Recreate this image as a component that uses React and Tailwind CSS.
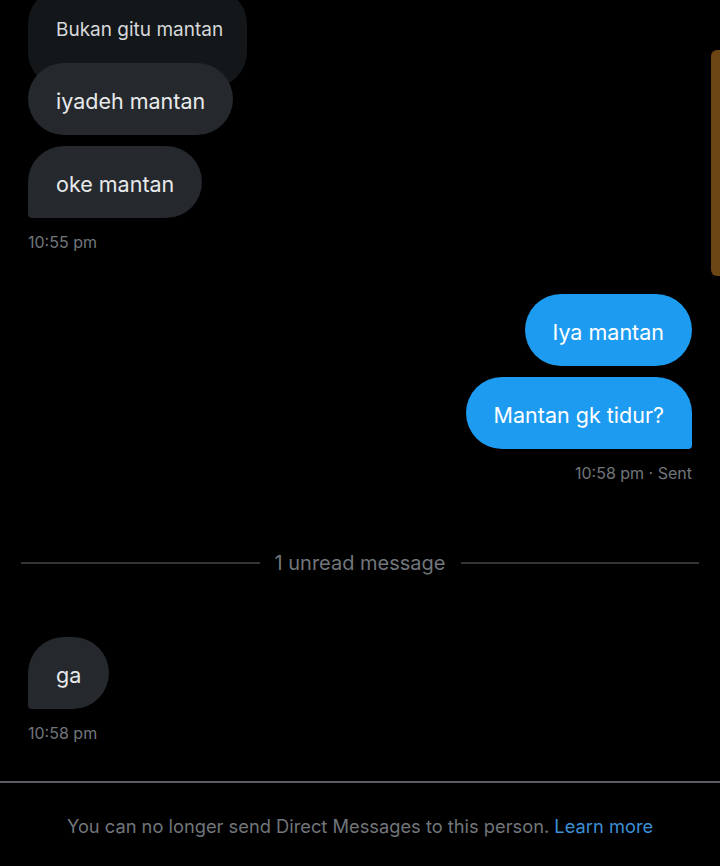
import React from "react";

const font = { fontFamily: "Inter, 'Noto Sans', sans-serif" };

const Received = ({ children, tail = false, className = "" }) => (
  <div
    className={`relative self-start rounded-[36px] bg-[#25292e] px-[28px] pt-[4px] h-[72px] flex items-center text-[21.5px] text-[#e7e9ea] ${
      tail ? "rounded-bl-[4px]" : ""
    } ${className}`}
  >
    {children}
  </div>
);

const Sent = ({ children, tail = false, className = "" }) => (
  <div
    className={`self-end rounded-[36px] bg-[#1d9bf0] px-[28px] pt-[4px] h-[72px] flex items-center text-[21.5px] text-white ${
      tail ? "rounded-br-[4px]" : ""
    } ${className}`}
  >
    {children}
  </div>
);

export default function App() {
  return (
    <div className="relative w-[720px] h-[866px] bg-black overflow-hidden flex flex-col" style={font}>
      {/* scrollbar */}
      <div className="absolute right-0 top-[50px] w-[9px] h-[226px] rounded-l-[6px] bg-[#6b4514]" />

      <div className="flex-1 flex flex-col px-[28px]">
        {/* faded bubble, partly scrolled away */}
        <div className="self-start mt-[-12px] h-[100px] w-[219px] rounded-[36px] bg-[#14171a] pl-[28px] pt-[30px] text-[19px] leading-[24px] text-[#d5d8da]">
          Bukan gitu mantan
        </div>
        <Received className="mt-[-25px]">iyadeh mantan</Received>
        <Received tail className="mt-[11px]">oke mantan</Received>
        <div className="mt-[14px] text-[16px] leading-[20px] text-[#71767b]">10:55 pm</div>

        <Sent className="mt-[42px]">Iya mantan</Sent>
        <Sent tail className="mt-[11px]">Mantan gk tidur?</Sent>
        <div className="self-end mt-[14px] text-[16px] leading-[20px] text-[#71767b]">10:58 pm · Sent</div>

        <div className="mt-[68px] -mx-[7px] flex items-center gap-[15px]">
          <div className="flex-1 h-[2px] bg-[#333639]" />
          <div className="text-[20px] leading-[24px] text-[#71767b]">1 unread message</div>
          <div className="flex-1 h-[2px] bg-[#333639]" />
        </div>

        <Received tail className="mt-[62px]">ga</Received>
        <div className="mt-[14px] text-[16px] leading-[20px] text-[#71767b]">10:58 pm</div>
      </div>

      <div className="h-[85px] border-t-2 border-[#5b5f64] flex items-center justify-center pt-[4px] text-[18.3px] text-[#71767b]">
        <span>
          You can no longer send Direct Messages to this person.{" "}
          <span className="text-[#3b8fd6]">Learn more</span>
        </span>
      </div>
    </div>
  );
}
